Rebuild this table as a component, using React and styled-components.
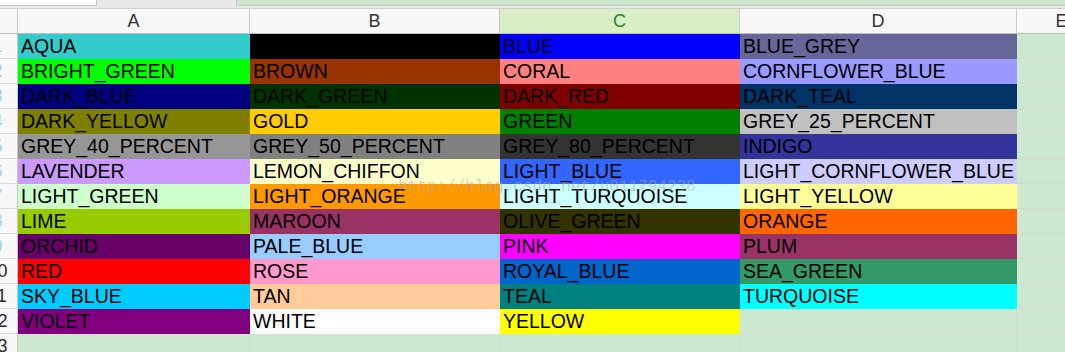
import React from "react";
import styled, { createGlobalStyle } from "styled-components";

const GlobalStyle = createGlobalStyle`
  html, body {
    margin: 0;
    padding: 0;
    overflow: hidden;
    background: #cce8cf;
  }
  * { box-sizing: border-box; }
`;

const GRID_LINE = "#d6d6d6";
const EMPTY_FILL = "#cce8cf";

const Page = styled.div`
  position: relative;
  width: 100%;
  height: 352px;
  overflow: hidden;
  font-family: "Liberation Sans", Arial, sans-serif;
`;

const TopBar = styled.div`
  display: flex;
  height: 9px;
  background: #e8e8e8;
  border-bottom: 1px solid #cfcfcf;
`;

const NameBox = styled.div`
  width: 97px;
  height: 6px;
  background: #ffffff;
  border-right: 1px solid #c6c6c6;
  border-bottom: 1px solid #c6c6c6;
`;

const FormulaBox = styled.div`
  flex: 1;
  height: 6px;
  margin-left: 139px;
  background: #cde7cd;
  border-left: 1px solid #c6c6c6;
  border-bottom: 1px solid #c6c6c6;
`;

const Sheet = styled.div`
  display: grid;
  grid-template-columns: 18px 232px 250px 240px 277px 90px;
  grid-auto-rows: 25px;
  width: max-content;
`;

const ColHeader = styled.div`
  display: flex;
  align-items: center;
  justify-content: center;
  background: ${(p) => (p.$active ? "#d9edc7" : "#f8f8f8")};
  color: ${(p) => (p.$active ? "#1e8a1e" : "#333333")};
  border-right: 1px solid #cbcbcb;
  border-bottom: 1px solid #bdbdbd;
  font-size: 18px;
`;

const RowHeader = styled.div`
  overflow: hidden;
  background: #f8f8f8;
  border-right: 1px solid #c8c8c8;
  border-bottom: 1px solid #dadada;
`;

/* The header column is scrolled partly out of view, so the numbers are centred
   on a point just left of the visible edge. */
const RowNumber = styled.span`
  display: block;
  width: 37px;
  margin-left: -21px;
  text-align: center;
  font-size: 18px;
  line-height: 24px;
  color: ${(p) => (p.$faint ? "#9fd3f3" : "#2a2a2a")};
`;

const Cell = styled.div`
  overflow: hidden;
  white-space: nowrap;
  padding-left: 3px;
  font-size: 19.5px;
  line-height: 24px;
  color: #000000;
  background: ${(p) => p.$fill || EMPTY_FILL};
  border-right: 1px solid ${(p) => p.$fill || GRID_LINE};
  border-bottom: 1px solid ${(p) => p.$fill || GRID_LINE};
`;

const Watermark = styled.div`
  position: absolute;
  left: 398px;
  top: 179px;
  font-family: "Liberation Mono", "Courier New", monospace;
  font-size: 16px;
  line-height: 16px;
  color: rgba(165, 165, 165, 0.5);
  white-space: nowrap;
  pointer-events: none;
`;

const COLUMNS = [
  { key: "A" },
  { key: "B" },
  { key: "C", active: true },
  { key: "D" },
  { key: "E" },
];

const ROWS = [
  [["AQUA", "#33cccc"], ["BLACK", "#000000"], ["BLUE", "#0000ff"], ["BLUE_GREY", "#666699"]],
  [["BRIGHT_GREEN", "#00ff00"], ["BROWN", "#993300"], ["CORAL", "#ff8080"], ["CORNFLOWER_BLUE", "#9999ff"]],
  [["DARK_BLUE", "#000080"], ["DARK_GREEN", "#003300"], ["DARK_RED", "#800000"], ["DARK_TEAL", "#003366"]],
  [["DARK_YELLOW", "#808000"], ["GOLD", "#ffcc00"], ["GREEN", "#008000"], ["GREY_25_PERCENT", "#c0c0c0"]],
  [["GREY_40_PERCENT", "#969696"], ["GREY_50_PERCENT", "#808080"], ["GREY_80_PERCENT", "#333333"], ["INDIGO", "#333399"]],
  [["LAVENDER", "#cc99ff"], ["LEMON_CHIFFON", "#ffffcc"], ["LIGHT_BLUE", "#3366ff"], ["LIGHT_CORNFLOWER_BLUE", "#ccccff"]],
  [["LIGHT_GREEN", "#ccffcc"], ["LIGHT_ORANGE", "#ff9900"], ["LIGHT_TURQUOISE", "#ccffff"], ["LIGHT_YELLOW", "#ffff99"]],
  [["LIME", "#99cc00"], ["MAROON", "#993366"], ["OLIVE_GREEN", "#333300"], ["ORANGE", "#ff6600"]],
  [["ORCHID", "#660066"], ["PALE_BLUE", "#99ccff"], ["PINK", "#ff00ff"], ["PLUM", "#993366"]],
  [["RED", "#ff0000"], ["ROSE", "#ff99cc"], ["ROYAL_BLUE", "#0066cc"], ["SEA_GREEN", "#339966"]],
  [["SKY_BLUE", "#00ccff"], ["TAN", "#ffcc99"], ["TEAL", "#008080"], ["TURQUOISE", "#00ffff"]],
  [["VIOLET", "#800080"], ["WHITE", "#ffffff"], ["YELLOW", "#ffff00"], null],
  [null, null, null, null],
  [null, null, null, null],
];

export default function App() {
  return (
    <>
      <GlobalStyle />
      <Page>
        <TopBar>
          <NameBox />
          <FormulaBox />
        </TopBar>
        <Sheet>
          <ColHeader />
          {COLUMNS.map((c) => (
            <ColHeader key={c.key} $active={c.active}>
              {c.key}
            </ColHeader>
          ))}
          {ROWS.map((row, r) => (
            <React.Fragment key={r}>
              <RowHeader>
                <RowNumber $faint={r + 1 < 10}>{r + 1}</RowNumber>
              </RowHeader>
              {row.map((cell, c) => (
                <Cell key={c} $fill={cell ? cell[1] : undefined}>
                  {cell ? cell[0] : ""}
                </Cell>
              ))}
              <Cell />
            </React.Fragment>
          ))}
        </Sheet>
        <Watermark>http://blog.csdn.net/u011794238</Watermark>
      </Page>
    </>
  );
}
